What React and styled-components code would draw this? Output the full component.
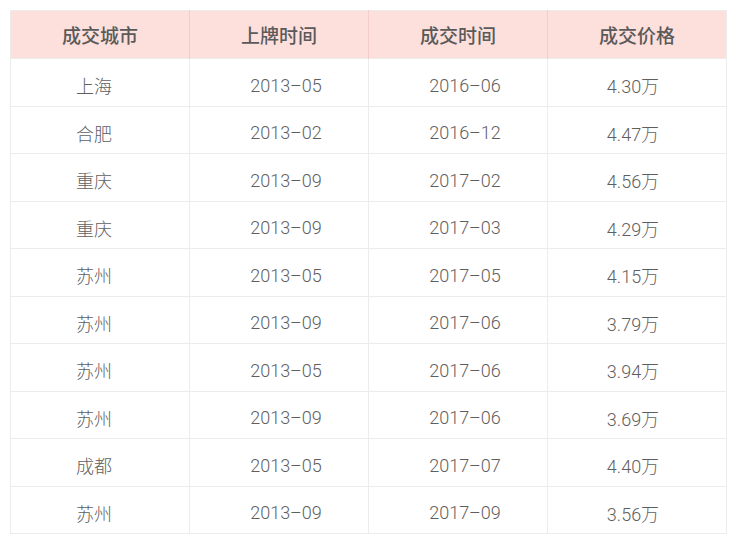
import styled, { createGlobalStyle } from "styled-components";

const GlobalStyle = createGlobalStyle`
  html, body {
    margin: 0;
    padding: 0;
    background: #ffffff;
  }
  body {
    font-family: Roboto, "Noto Sans CJK SC", sans-serif;
  }
`;

const Page = styled.div`
  padding: 10px 13px 0 10px;
  width: 740px;
  box-sizing: border-box;
`;

const Table = styled.table`
  width: 717px;
  border-collapse: collapse;
  table-layout: fixed;
  border: 1px solid #ececec;
`;

const HeadRow = styled.tr`
  height: 48px;
  background: #fde0dc;
`;

const HeadCell = styled.th`
  border-left: 1px solid #f3cdc8;
  font-family: "Noto Sans CJK SC", sans-serif;
  font-size: 19px;
  font-weight: 500;
  color: #5a5a5a;
  text-align: center;
  padding: 0;
  &:first-child {
    border-left: none;
  }
`;

const Row = styled.tr`
  height: 47.5px;
  border-top: 1px solid #ececec;
`;

const Cell = styled.td`
  border-left: 1px solid #ececec;
  font-size: 18px;
  font-weight: 300;
  color: #5f5f5f;
  text-align: center;
  padding-top: 6px;
  padding-bottom: 0;
  padding-left: ${(p) => (p.$shift > 0 ? p.$shift * 2 : 0)}px;
  padding-right: ${(p) => (p.$shift < 0 ? -p.$shift * 2 : 0)}px;
  &:first-child {
    border-left: none;
  }
`;

const columns = ["成交城市", "上牌时间", "成交时间", "成交价格"];
const shifts = [-6, 7, 7, -4];

const rows = [
  ["上海", "2013–05", "2016–06", "4.30万"],
  ["合肥", "2013–02", "2016–12", "4.47万"],
  ["重庆", "2013–09", "2017–02", "4.56万"],
  ["重庆", "2013–09", "2017–03", "4.29万"],
  ["苏州", "2013–05", "2017–05", "4.15万"],
  ["苏州", "2013–09", "2017–06", "3.79万"],
  ["苏州", "2013–05", "2017–06", "3.94万"],
  ["苏州", "2013–09", "2017–06", "3.69万"],
  ["成都", "2013–05", "2017–07", "4.40万"],
  ["苏州", "2013–09", "2017–09", "3.56万"],
];

export default function App() {
  return (
    <Page>
      <GlobalStyle />
      <Table>
        <thead>
          <HeadRow>
            {columns.map((c) => (
              <HeadCell key={c}>{c}</HeadCell>
            ))}
          </HeadRow>
        </thead>
        <tbody>
          {rows.map((r, i) => (
            <Row key={i}>
              {r.map((v, j) => (
                <Cell key={j} $shift={shifts[j]}>
                  {v}
                </Cell>
              ))}
            </Row>
          ))}
        </tbody>
      </Table>
    </Page>
  );
}
